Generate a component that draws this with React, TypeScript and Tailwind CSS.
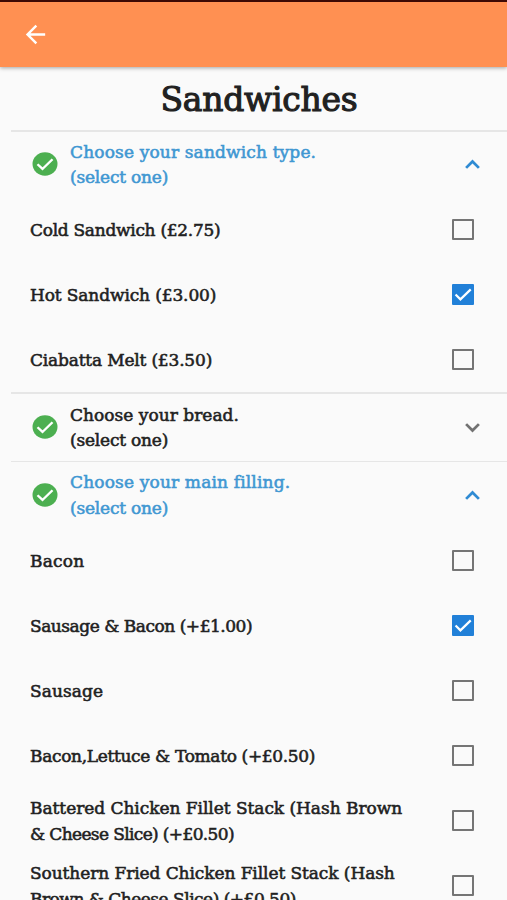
type Line = { text: string; spacing: string };
type Option = { lines: Line[]; checked?: boolean };
type Section = { title: Line; open: boolean; head: string; options: Option[] };

const sections: Section[] = [
  {
    title: { text: "Choose your sandwich type.", spacing: "tracking-[0.15px]" },
    open: true,
    head: "h-[65px] border-t-2",
    options: [
      { lines: [{ text: "Cold Sandwich (£2.75)", spacing: "tracking-[-0.29px]" }] },
      { lines: [{ text: "Hot Sandwich (£3.00)", spacing: "tracking-[-0.12px]" }], checked: true },
      { lines: [{ text: "Ciabatta Melt (£3.50)", spacing: "tracking-[-0.18px]" }] },
    ],
  },
  {
    title: { text: "Choose your bread.", spacing: "tracking-[0.03px]" },
    open: false,
    head: "h-[67px] border-t-2",
    options: [],
  },
  {
    title: { text: "Choose your main filling.", spacing: "tracking-[0.16px]" },
    open: true,
    head: "h-[66px] border-t",
    options: [
      { lines: [{ text: "Bacon", spacing: "tracking-[0.2px]" }] },
      { lines: [{ text: "Sausage & Bacon (+£1.00)", spacing: "tracking-[-0.47px]" }], checked: true },
      { lines: [{ text: "Sausage", spacing: "tracking-[0.1px]" }] },
      { lines: [{ text: "Bacon,Lettuce & Tomato (+£0.50)", spacing: "tracking-[-0.33px]" }] },
      {
        lines: [
          { text: "Battered Chicken Fillet Stack (Hash Brown", spacing: "tracking-[-0.04px]" },
          { text: "& Cheese Slice) (+£0.50)", spacing: "tracking-[-0.63px]" },
        ],
      },
      {
        lines: [
          { text: "Southern Fried Chicken Fillet Stack (Hash", spacing: "tracking-[-0.08px]" },
          { text: "Brown & Cheese Slice) (+£0.50)", spacing: "tracking-[-0.5px]" },
        ],
      },
    ],
  },
];

function CheckCircle() {
  return (
    <svg viewBox="0 0 24 24" preserveAspectRatio="none" className="mb-[1px] h-[28px] w-[30px] shrink-0" fill="#4caf50">
      <circle cx="12" cy="12" r="10" />
      <path d="M6 12.2l4 4 8-8.3" fill="none" stroke="#fff" strokeWidth="1.9" />
    </svg>
  );
}

function Chevron({ open }: { open: boolean }) {
  return (
    <svg
      viewBox="0 0 24 24"
      className="h-[29px] w-[29px] shrink-0"
      fill="none"
      strokeWidth="2.3"
      stroke={open ? "#2f8bd3" : "#727272"}
    >
      {open ? <path d="M6.7 14.8L12 9.5l5.3 5.3" /> : <path d="M6.7 9.2l5.3 5.3 5.3-5.3" />}
    </svg>
  );
}

function Checkbox({ checked }: { checked?: boolean }) {
  if (!checked) return <span className="h-[21px] w-[22px] shrink-0 rounded-[1px] border-2 border-[#757575]" />;
  return (
    <span className="flex h-[21px] w-[22px] shrink-0 items-center justify-center rounded-[1px] bg-[#2180d8]">
      <svg viewBox="0 0 23 22" className="h-full w-full" fill="none" stroke="#fff" strokeWidth="2.3">
        <path d="M3.7 11l5.1 5.1L19.6 5.6" />
      </svg>
    </span>
  );
}

export default function App() {
  return (
    <div className="flex h-[900px] w-[507px] flex-col overflow-hidden bg-[#fafafa] font-['DejaVu_Serif',serif] text-[17px] leading-[25.5px] text-[#212121]">
      <header className="z-10 flex h-[67px] shrink-0 items-center border-t-2 border-[#3d0904] bg-[#ff9052] pl-[21px] shadow-[0_1px_4px_rgba(0,0,0,0.35)]">
        <svg viewBox="0 0 24 24" className="h-[29px] w-[29px]" fill="#fff">
          <path d="M20 11H7.83l5.59-5.59L12 4l-8 8 8 8 1.41-1.41L7.83 13H20v-2z" />
        </svg>
      </header>
      <h1 className="flex h-[63px] shrink-0 items-center justify-center pl-[11px] pt-[2px] text-[33px] tracking-[-0.27px] [-webkit-text-stroke:1.1px]">
        Sandwiches
      </h1>
      <main className="flex flex-col pl-[11px] [-webkit-text-stroke:0.55px]">
        {sections.map((section) => (
          <section key={section.title.text} className="shrink-0">
            <div className={`box-content flex items-center border-[#e6e6e6] pl-[19px] pr-[20px] ${section.head}`}>
              <CheckCircle />
              <div className={`ml-[10px] flex grow flex-col items-start pt-[1px] ${section.open ? "text-[#4097d2]" : ""}`}>
                <span className={section.title.spacing}>{section.title.text}</span>
                <span className="tracking-[-0.2px]">(select one)</span>
              </div>
              <Chevron open={section.open} />
            </div>
            {section.options.map((option) => (
              <div key={option.lines[0].text} className="flex h-[65px] items-center justify-between pl-[19px] pr-[33px]">
                <div className="flex flex-col items-start whitespace-nowrap pt-[2px]">
                  {option.lines.map((line) => (
                    <span key={line.text} className={line.spacing}>{line.text}</span>
                  ))}
                </div>
                <Checkbox checked={option.checked} />
              </div>
            ))}
          </section>
        ))}
      </main>
    </div>
  );
}
